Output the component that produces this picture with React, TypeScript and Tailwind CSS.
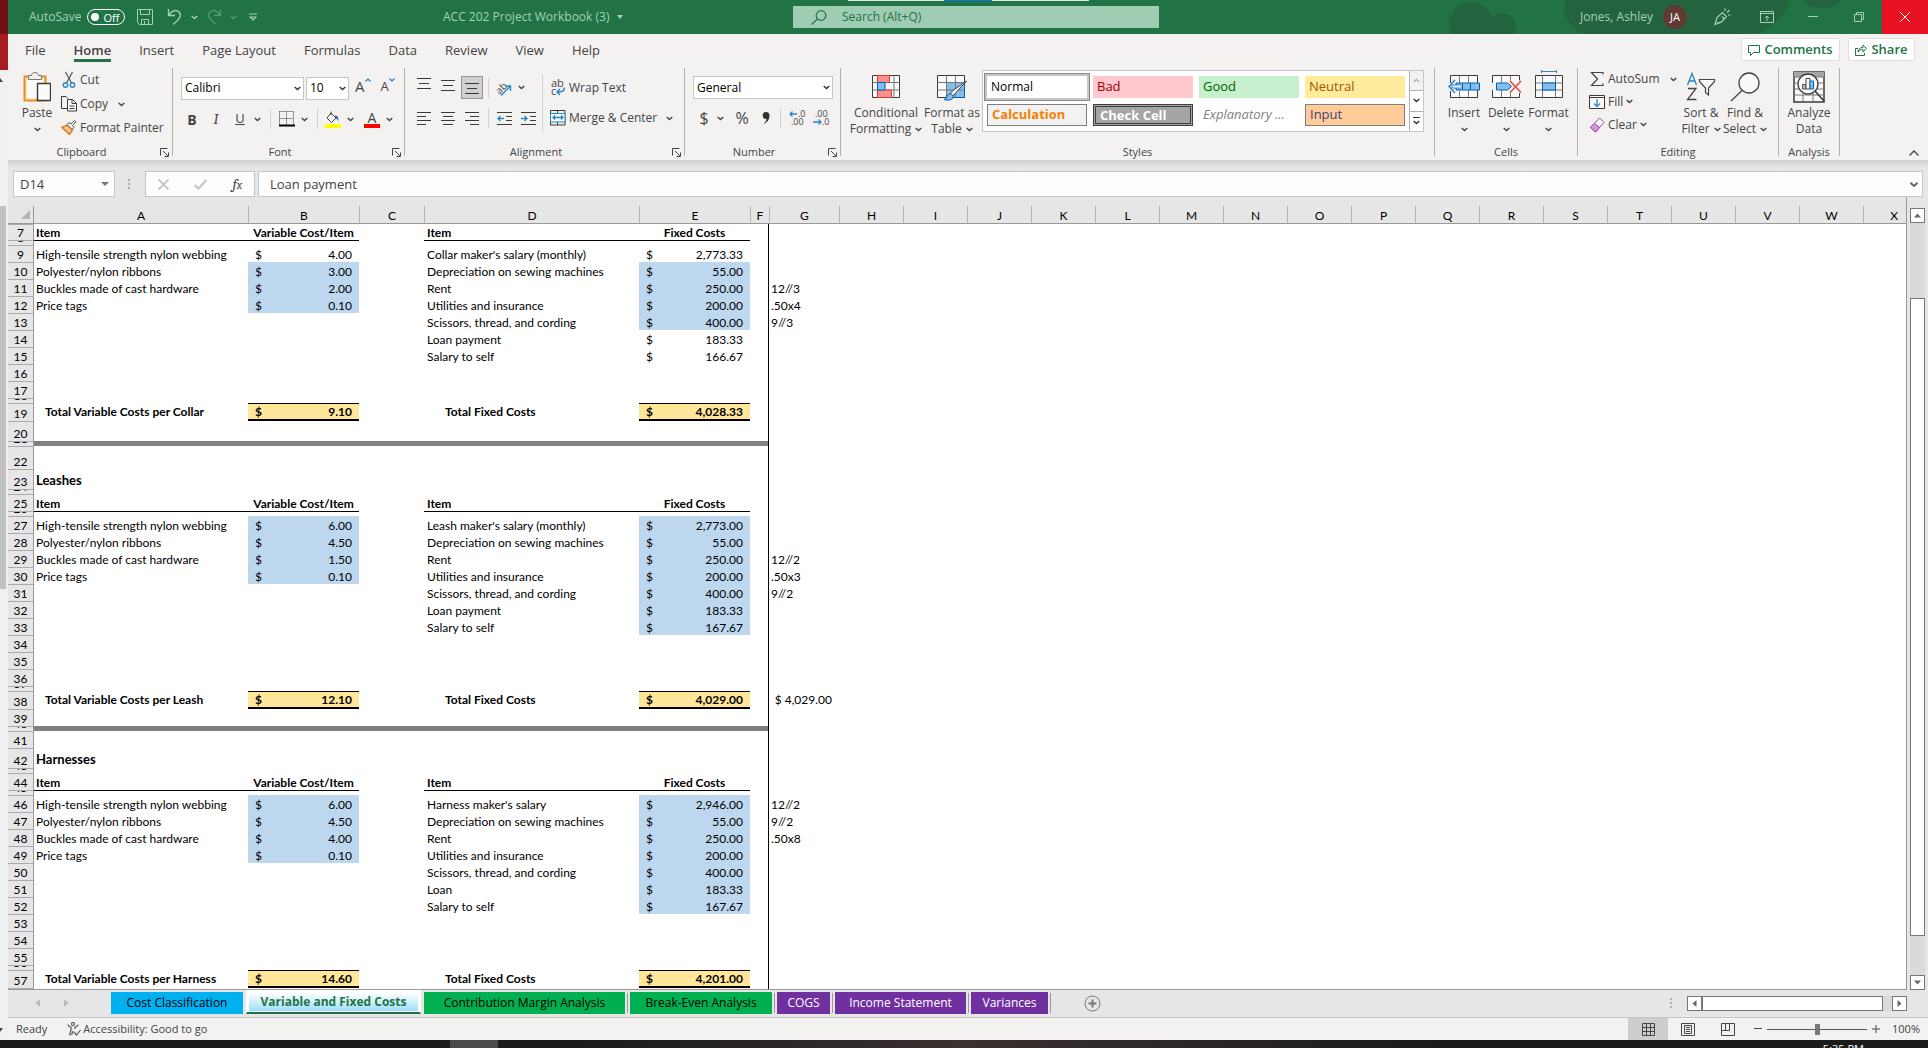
import React, { useState } from 'react';

interface IconProps {
  className?: string;
}

const Chevron: React.FC<IconProps> = ({ className = '' }) => (
  <svg className={`w-[7px] h-[5px] shrink-0 ${className}`} viewBox="0 0 7 5" fill="none" stroke="currentColor" strokeWidth={1.4}>
    <path d="M0.7 0.9 3.5 3.6 6.3 0.9" />
  </svg>
);

const Launcher: React.FC<{ label: string }> = ({ label }) => (
  <button aria-label={label} className="text-[#444]">
    <svg className="w-[9px] h-[9px]" viewBox="0 0 9 9" fill="none" stroke="currentColor">
      <path d="M0.5 7.5v-7h7M3 3l5 5M8.5 4.5v4h-4" />
    </svg>
  </button>
);

const Divider: React.FC<IconProps> = ({ className = 'h-5' }) => <span className={`w-px shrink-0 bg-[#d2d0ce] ${className}`} />;

const Group: React.FC<{ label: string; launcher?: boolean; className: string; children: React.ReactNode }> = ({
  label,
  launcher,
  className,
  children,
}) => (
  <section aria-label={label} className={`flex h-[88px] shrink-0 flex-col border-r border-[#b3b0ad] ${className}`}>
    <div className="flex h-[76px] shrink-0 items-start">{children}</div>
    <div className="flex h-4 shrink-0 items-center px-[3px]">
      <span className={`flex-1 text-center text-[11px] leading-4 ${launcher ? 'pr-2' : ''}`}>{label}</span>
      {launcher && <Launcher label={`${label} settings`} />}
    </div>
  </section>
);

const BigButton: React.FC<{ icon: React.ReactNode; lines: string[]; chevron?: 'inline' | 'below'; className: string }> = ({
  icon,
  lines,
  chevron,
  className,
}) => (
  <button className={`flex flex-col items-center text-[12px] leading-4 ${className}`}>
    <span className="flex h-[37px] items-center justify-center">{icon}</span>
    {lines.map((line, i) => (
      <span key={line} className="flex items-center gap-1 whitespace-nowrap">
        {line}
        {chevron === 'inline' && i === lines.length - 1 && <Chevron />}
      </span>
    ))}
    {chevron === 'below' && (
      <span className="flex h-4 items-center">
        <Chevron />
      </span>
    )}
  </button>
);

/* icons */

const PasteIcon = () => (
  <svg className="w-7 h-8" viewBox="0 0 28 32" fill="none">
    <path d="M1.5 5.5h21v24h-21z" fill="#fbe3b3" stroke="#e0922f" strokeWidth={2} />
    <path d="M4 8h16v19H4z" fill="#fafafa" />
    <path d="M5.5 8.5v-4h3C8.5 0.5 15.5 0.5 15.5 4.5h3v4z" fill="#f3f2f1" stroke="#777" />
    <path d="M14.5 12.5h13v17h-13z" fill="#fafafa" stroke="#3b3a39" strokeWidth={1.4} />
  </svg>
);

const CutIcon = () => (
  <svg className="w-4 h-[18px]" viewBox="0 0 16 18" fill="none">
    <path d="M4.5 1 10.5 12M11.5 1 5.5 12" stroke="#555" strokeWidth={1.2} />
    <circle cx="4.5" cy="14" r="2.2" stroke="#2b88c8" strokeWidth={1.4} />
    <circle cx="11.5" cy="14" r="2.2" stroke="#2b88c8" strokeWidth={1.4} />
  </svg>
);

const CopyIcon = () => (
  <svg className="w-4 h-[18px]" viewBox="0 0 16 18" fill="none" stroke="#3b3a39">
    <path d="M6 13.5H0.5v-12h4.5l2 2" />
    <path d="M6.5 4.5h5l4 4v7.5h-9z" fill="#fafafa" />
    <path d="M11 4.5v4h4.5M8.5 11h5M8.5 13.5h5" />
  </svg>
);

const PainterIcon = () => (
  <svg className="w-4 h-[18px]" viewBox="0 0 16 18" fill="none">
    <path d="M1 8.5 6.5 6l5 5L8.5 15.5z" fill="#f8c98b" stroke="#e07a1a" strokeWidth={1.4} />
    <path d="M3 10l5.5 5" stroke="#e07a1a" />
    <path d="M6 5.5 8 3.5l2 1.5L13.5 1.5l1.500 1.5-3.500 3.5 1.500 2-2 2z" fill="#f3f2f1" stroke="#555" />
  </svg>
);

const BordersIcon = () => (
  <svg className="w-4 h-4" viewBox="0 0 16 16" fill="none" stroke="#3b3a39">
    <path d="M0.5 0.5h14M0.5 0.5v14M14.5 0.5v14M7.5 0.5v14M0.5 7.5h14" strokeDasharray="1 1" />
    <path d="M0 14.5h16" strokeWidth={2} stroke="#000" />
  </svg>
);

const FillColorIcon = () => (
  <svg className="w-4 h-[17px]" viewBox="0 0 16 17" fill="none">
    <path d="M6 2 11 7 6.5 11.5 2 7zM6 4V0.5" stroke="#444" />
    <path d="M10 4.5c2 0 3.500 1.500 3.500 6-1-2.500-2-3-3-3z" fill="#1f5f9e" />
    <path d="M0 13h16v4H0z" fill="#ffff00" />
  </svg>
);

const FontColorIcon = () => (
  <span className="flex w-4 flex-col items-center">
    <span className="text-[14px] leading-[13px]">A</span>
    <span className="h-1 w-4 bg-[#ff0000]" />
  </span>
);

const LINES: Record<string, string> = {
  top: 'M0 1.5h14M2 6.5h10M0 11.5h14',
  middle: 'M0 1.5h14M2 6.5h10M0 11.5h14',
  bottom: 'M0 1.5h14M2 6.5h10M0 11.5h14',
  left: 'M0 0.5h14M0 4.5h9M0 8.5h14M0 12.5h9',
  center: 'M0 0.5h14M2 4.5h10M0 8.5h14M2 12.5h10',
  right: 'M0 0.5h14M5 4.5h9M0 8.5h14M5 12.5h9',
};

const AlignIcon: React.FC<{ kind: string }> = ({ kind }) => (
  <svg className="w-[14px] h-[13px]" viewBox="0 0 14 13" fill="none" stroke="#3b3a39">
    <path d={LINES[kind]} />
  </svg>
);

const OrientationIcon = () => (
  <svg className="w-[18px] h-[18px] overflow-visible" viewBox="0 0 18 18" fill="none">
    <text x="1" y="13" fontSize="10" fill="#444" transform="rotate(-45 6 10)" fontFamily="Open Sans">
      ab
    </text>
    <path d="M6 16.5 15.5 7M10.5 7h5v5" stroke="#2b88c8" strokeWidth={1.4} />
  </svg>
);

const IndentIcon: React.FC<{ out?: boolean }> = ({ out }) => (
  <svg className="w-[15px] h-[13px]" viewBox="0 0 15 13" fill="none">
    <path d="M0 0.5h15M9 4.5h6M9 8.5h6M0 12.5h15" stroke="#3b3a39" />
    <path d={out ? 'M7 6.5H1M3.5 4 1 6.5 3.5 9' : 'M0 6.5h6M3.5 4 6 6.5 3.5 9'} stroke="#2b88c8" strokeWidth={1.3} />
  </svg>
);

const WrapIcon = () => (
  <svg className="w-4 h-[18px] overflow-visible" viewBox="0 0 16 18" fill="none">
    <text x="1" y="8" fontSize="11" fill="#444" fontFamily="Open Sans">
      ab
    </text>
    <text x="1" y="16" fontSize="11" fill="#444" fontFamily="Open Sans">
      c
    </text>
    <path d="M14 8.5c1 4-2 4.5-7 4.5M10 10l-3 3 3 3" stroke="#2b88c8" strokeWidth={1.5} />
  </svg>
);

const MergeIcon = () => (
  <svg className="w-4 h-4" viewBox="0 0 16 16" fill="none">
    <path d="M0.5 0.5h14.5v14.5H0.5zM7.5 0.5v3M7.5 12v3" stroke="#3b3a39" />
    <path d="M0.5 3.5h14.5v8.5H0.5z" fill="#f3fafe" stroke="#2b88c8" />
    <path d="M3 7.5h10M5 5.5l-2 2 2 2M11 5.5l2 2-2 2" stroke="#2b88c8" strokeWidth={1.3} />
  </svg>
);

const DecimalIcon: React.FC<{ more?: boolean }> = ({ more }) => (
  <svg className="w-4 h-[18px] overflow-visible" viewBox="0 0 16 18" fill="none" fontFamily="Open Sans" fontSize="9">
    <text x={more ? 9 : 2} y="8" fill="#444">
      {more ? '.0' : '.00'}
    </text>
    <text x={more ? 2 : 9} y="16" fill="#444">
      {more ? '.00' : '.0'}
    </text>
    <path d={more ? 'M8 5H1M3.5 2.5 1 5l2.5 2.5' : 'M0 13h8M5.5 10.5 8 13l-2.5 2.5'} stroke="#2b88c8" strokeWidth={1.3} />
  </svg>
);

const ConditionalIcon = () => (
  <svg className="w-7 h-[23px]" viewBox="0 0 28 23" fill="none">
    <path d="M0.5 0.5h27v22h-27z" fill="#fafafa" stroke="#3b3a39" />
    <path d="M0.5 7.5h27M0.5 15h27M5.5 0.5v22M22 0.5v22" stroke="#777" />
    <path d="M5.5 0.5h12v7h-12zM5.5 15h14v7.5h-14z" fill="#fb9090" stroke="#e03a32" />
    <path d="M5.5 7.5h7.5V15H5.5z" fill="#83beec" stroke="#0063b1" />
  </svg>
);

const FormatTableIcon = () => (
  <svg className="w-8 h-7" viewBox="0 0 32 28" fill="none">
    <path d="M1.5 2.5h27v22h-27z" fill="#fafafa" stroke="#3b3a39" />
    <path d="M10.5 9.5h18v15h-18z" fill="#83beec" stroke="#0063b1" />
    <path d="M1.5 9.5h27M1.5 17h27M10.5 2.5v22M19.5 2.5v22" stroke="#777" />
    <path d="M30.5 8 20 19.5l-3 3.5-3-2 3-3.5z" fill="#fafafa" stroke="#444" />
    <path d="M8 26.5c3 0 2-5 6-5.5 3 0 4 3 2 5-2 1.5-5 1.5-8 .5z" fill="#83beec" stroke="#0063b1" />
  </svg>
);

const InsertIcon = () => (
  <svg className="w-8 h-[23px]" viewBox="0 0 32 23" fill="none">
    <path d="M2.5 0.5h27v22h-27z" fill="#fafafa" stroke="#3b3a39" />
    <path d="M11.5 0.5v22M20.5 0.5v22" stroke="#777" />
    <path d="M0 8h13v8H0z" fill="#f3f2f1" />
    <path d="M8 8h23.5v7H8z" fill="#83beec" stroke="#0063b1" />
    <path d="M22.5 8v7M14.5 8v7" stroke="#0063b1" />
    <path d="M13 10H4v3h9" fill="#fff" stroke="#2b88c8" />
    <path d="M7 5 1 11.5 7 18" stroke="#2b88c8" strokeWidth={1.6} />
  </svg>
);

const DeleteIcon = () => (
  <svg className="w-8 h-[23px]" viewBox="0 0 32 23" fill="none">
    <path d="M2.5 0.5h27v22h-27z" fill="#fafafa" stroke="#3b3a39" />
    <path d="M11.5 0.5v22M20.5 0.5v22" stroke="#777" />
    <path d="M0 8h31v7H0z" fill="#f3f2f1" />
    <path d="M6.5 8h11l4 3.5-4 3.5h-11z" fill="#83beec" stroke="#0063b1" />
    <path d="M20 6l11 11.5M31 6 20 17.5" stroke="#f3f2f1" strokeWidth={3} />
    <path d="M20 6l11 11.5M31 6 20 17.5" stroke="#e8453c" strokeWidth={1.5} />
  </svg>
);

const FormatIcon = () => (
  <svg className="mb-[5px] w-7 h-7" viewBox="0 0 28 28" fill="none">
    <path d="M0.5 5.5h27v22h-27z" fill="#fafafa" stroke="#3b3a39" />
    <path d="M0.5 13h27M0.5 20h27M7.5 5.5v22M20.5 5.5v22" stroke="#777" />
    <path d="M7.5 13h13v7h-13z" fill="#83beec" stroke="#0063b1" />
    <path d="M7 1.5h14M6.5 0v3M21.5 0v3" stroke="#2b88c8" />
  </svg>
);

const SumIcon = () => (
  <svg className="w-4 h-4" viewBox="0 0 16 16" fill="none" stroke="#444" strokeWidth={1.2}>
    <path d="M14 3.5V1.5H2.5l6 6.5-6 6.5H14v-2" />
  </svg>
);

const FillIcon = () => (
  <svg className="w-4 h-4" viewBox="0 0 16 16" fill="none">
    <path d="M0.5 1.5h15v13h-15zM0.5 3.5h15" fill="#fafafa" stroke="#3b3a39" />
    <path d="M8 5v7M5 9.5l3 3 3-3" stroke="#2b88c8" strokeWidth={1.3} />
  </svg>
);

const ClearIcon = () => (
  <svg className="w-4 h-4" viewBox="0 0 16 16" fill="none" stroke="#9b3fa8">
    <path d="M10.5 1 15 5.5 6.5 15 1.5 10.5z" fill="#fafafa" />
    <path d="M5.5 6.5 10.5 10.5 6.5 15 1.5 10.5z" fill="#d69bdc" />
  </svg>
);

const SortIcon = () => (
  <svg className="w-[30px] h-[30px]" viewBox="0 0 30 30" fill="none">
    <path d="M1.5 13 6 1.5 10.5 13M3 9h6" stroke="#2b88c8" strokeWidth={1.4} />
    <path d="M2 16.5h8L1.5 27.5h9" stroke="#444" strokeWidth={1.3} />
    <path d="M13.5 7.5h15v2l-6 6.5v7l-3-2.5V16l-6-6.5z" stroke="#444" strokeWidth={1.2} fill="#fafafa" />
  </svg>
);

const FindIcon = () => (
  <svg className="w-[30px] h-[30px]" viewBox="0 0 30 30" fill="none" stroke="#444" strokeWidth={1.3}>
    <circle cx="19" cy="11" r="10" fill="#fafafa" />
    <path d="M12 18.5 1 29" />
  </svg>
);

const AnalyzeIcon = () => (
  <svg className="w-8 h-8" viewBox="0 0 32 32" fill="none">
    <path d="M1 1h30v30H1z" fill="#fafafa" stroke="#3b3a39" strokeWidth={1.5} />
    <path d="M1 1h30v5H1z" fill="#a8a6a4" />
    <path d="M1 6h30M1 12h30M1 18h30M1 24h30M10 22v9M20 22v9" stroke="#777" />
    <circle cx="15" cy="13" r="10" fill="#fafafa" stroke="#444" strokeWidth={1.4} />
    <path d="M9.5 13.5h3.5V18H9.5z" fill="#bbb" stroke="#555" />
    <path d="M13 7.5h4V18h-4z" fill="#fafafa" stroke="#444" />
    <path d="M17 10h3.5v8H17z" fill="#83beec" stroke="#0063b1" />
    <path d="M22 20l9 10" stroke="#333" strokeWidth={1.5} />
  </svg>
);

/* title bar */

const TitleBar = () => {
  const [autoSave, setAutoSave] = useState(false);

  return (
    <header className="relative flex h-[34px] shrink-0 items-center bg-[#217346] text-[12px] text-[#a3d0b6]">
      <svg className="absolute right-0 top-0 h-[34px] w-[520px]" viewBox="0 0 520 34" fill="#24633f">
        <circle cx="63" cy="24" r="22" />
        <circle cx="94" cy="27" r="14" />
        <path d="M158 0H240V34H176C162 28 152 14 158 0z" />
        <path d="M232 0H382C378 14 366 26 348 34H232z" />
        <path d="M395 0h38c-4 10-30 12-38 0z" />
      </svg>
      <div className="relative flex flex-1 items-center">
        <span className="pl-[21px]">AutoSave</span>
        <button
          aria-pressed={autoSave}
          aria-label="AutoSave"
          onClick={() => setAutoSave(!autoSave)}
          className="ml-[6px] flex h-4 w-[38px] items-center justify-between rounded-full border border-white pl-[3px] pr-[5px] text-[11px] leading-none text-white"
        >
          <span className="h-2 w-2 rounded-full bg-white" />
          {autoSave ? 'On' : 'Off'}
        </button>
        <button aria-label="Save" className="ml-3">
          <svg className="w-4 h-4" viewBox="0 0 16 16" fill="none" stroke="currentColor">
            <path d="M0.5 0.5h15v15h-13l-2-2zM3.5 0.5v5h9v-5M4.5 15.5v-5h7v5M7.5 12v3" />
          </svg>
        </button>
        <button aria-label="Undo" className="ml-[14px] flex items-center gap-2">
          <svg className="w-4 h-[18px]" viewBox="0 0 16 18" fill="none" stroke="currentColor" strokeWidth={1.4}>
            <path d="M1.5 1v6.5H8M1.5 7.5C5 2 9 1.5 12 4c3 3 1 7-6 12.5" />
          </svg>
          <Chevron />
        </button>
        <button aria-label="Redo" className="ml-2 flex items-center gap-2 opacity-40">
          <svg className="w-4 h-[18px]" viewBox="0 0 16 18" fill="none" stroke="currentColor" strokeWidth={1.4}>
            <path d="M14.5 1v6.5H8M14.5 7.5C11 2 7 1.5 4 4c-3 3-1 7 6 12.5" />
          </svg>
          <Chevron />
        </button>
        <button aria-label="Customize Quick Access Toolbar" className="ml-3">
          <svg className="w-2 h-2" viewBox="0 0 8 8" fill="none" stroke="currentColor" strokeWidth={1.2}>
            <path d="M0 1h8M1 4l3 3 3-3z" />
          </svg>
        </button>
        <h1 className="flex flex-1 items-center justify-center gap-2 pl-4">
          ACC 202 Project Workbook (3)
          <svg className="w-[6px] h-1" viewBox="0 0 6 4" fill="currentColor">
            <path d="M0 0h6L3 4z" />
          </svg>
        </h1>
      </div>
      <label className="relative flex h-[22px] w-[366px] items-center bg-[#9fcdb4] pl-[18px] text-[#217346]">
        <svg className="h-[15px] w-4" viewBox="0 0 16 15" fill="none" stroke="currentColor" strokeWidth={1.2}>
          <circle cx="10" cy="5.5" r="4.8" />
          <path d="M6.5 9 0.5 14.5" />
        </svg>
        <input
          type="text"
          aria-label="Search"
          placeholder="Search (Alt+Q)"
          className="ml-[15px] flex-1 bg-transparent text-[12px] outline-none placeholder:text-[#217346]"
        />
      </label>
      <div className="relative flex h-full w-[769px] items-center justify-end">
        <span>Jones, Ashley</span>
        <span className="ml-[10px] flex h-6 w-6 items-center justify-center rounded-full bg-[#5f3a32] text-[11px] text-white">JA</span>
        <button aria-label="Coming soon" className="ml-[26px]">
          <svg className="w-[18px] h-[18px]" viewBox="0 0 18 18" fill="none" stroke="currentColor" strokeWidth={1.2}>
            <path d="M2 16.5 4 9.5 9.5 4.5l4 4-5 5.5zM4 15l4-1M9 8.5l2 2M12 3V0.5M14 4.5l2.5-2.5M15 7h2.5" />
          </svg>
        </button>
        <button aria-label="Ribbon display options" className="ml-[29px]">
          <svg className="w-[14px] h-3" viewBox="0 0 14 12" fill="none" stroke="currentColor">
            <path d="M0.5 0.5h13v11H0.5zM0.5 2.5h13M7 10V5M5 7l2-2 2 2" />
          </svg>
        </button>
        <button aria-label="Minimize" className="ml-[34px]">
          <svg className="w-[10px] h-[10px]" viewBox="0 0 10 10" stroke="currentColor">
            <path d="M0 4.5h10" />
          </svg>
        </button>
        <button aria-label="Restore" className="ml-9 mr-[18px]">
          <svg className="w-[10px] h-[10px]" viewBox="0 0 10 10" fill="none" stroke="currentColor">
            <path d="M0.5 2.5h7v7h-7zM2.5 2.5v-2h7v7h-2" />
          </svg>
        </button>
        <button aria-label="Close" className="flex h-full w-[46px] items-center justify-center bg-[#e81123] text-white">
          <svg className="w-[10px] h-[10px]" viewBox="0 0 10 10" stroke="currentColor">
            <path d="M0 0l10 10M10 0 0 10" />
          </svg>
        </button>
      </div>
      <div className="absolute left-[840px] top-0 flex h-px w-[241px] bg-[#dfe8e2]">
        <span className="ml-24 w-12 bg-[#0078d7]" />
      </div>
    </header>
  );
};

const MENU = ['File', 'Home', 'Insert', 'Page Layout', 'Formulas', 'Data', 'Review', 'View', 'Help'];

const MenuBar = () => (
  <nav className="flex h-[34px] shrink-0 items-start pl-[3px] pt-1 text-[#444]">
    {MENU.map((item) => (
      <button key={item} className="px-[14px] text-[13px]">
        <span className={`block h-6 leading-6 ${item === 'Home' ? 'border-b-[3px] border-[#217346] font-semibold' : ''}`}>{item}</span>
      </button>
    ))}
    <div className="ml-auto flex gap-2 pr-[13px] text-[13px] font-semibold text-[#217346]">
      <button className="flex h-[23px] w-[99px] items-center justify-center gap-1 rounded-xs border border-[#e1dfdd] bg-white">
        <svg className="w-3 h-3" viewBox="0 0 12 12" fill="none" stroke="currentColor">
          <path d="M0.5 1.5h11v7h-6l-3 3v-3h-2z" />
        </svg>
        Comments
      </button>
      <button className="flex h-[23px] w-[67px] items-center justify-center gap-1 rounded-xs border border-[#e1dfdd] bg-white">
        <svg className="w-3 h-3" viewBox="0 0 12 12" fill="none" stroke="currentColor">
          <path d="M3 4.5H0.5v7h9V9M3 8c0-3 2-4.5 5-4.5V1l3.5 3.5L8 8V5.5C6 5.5 4 6 3 8z" />
        </svg>
        Share
      </button>
    </div>
  </nav>
);

/* ribbon */

const Picker: React.FC<{ label: string; value: string; className: string }> = ({ label, value, className }) => (
  <span className={`relative flex h-[23px] shrink-0 items-center ${className}`}>
    <select aria-label={label} className="h-full w-full appearance-none border border-[#c8c6c4] bg-white pl-[3px] text-[12px] text-black">
      <option>{value}</option>
    </select>
    <Chevron className="pointer-events-none absolute right-[3px] text-[#333]" />
  </span>
);

const STYLE_BASE = 'h-[22px] w-[100px] overflow-hidden text-left pl-1 whitespace-nowrap';
const CELL_STYLES = [
  { name: 'Normal', className: 'bg-white text-black text-[12px] outline-2 outline-[#c8c6c4] ring-3 ring-[#8a8886]' },
  { name: 'Bad', className: 'bg-[#ffc7ce] text-[#9c0006] text-[13px]' },
  { name: 'Good', className: 'bg-[#c6efce] text-[#006100] text-[13px]' },
  { name: 'Neutral', className: 'bg-[#ffeb9c] text-[#9c5700] text-[13px]' },
  { name: 'Calculation', className: 'border border-[#7f7f7f] bg-[#f2f2f2] font-bold text-[#fa7d00] text-[13px]' },
  { name: 'Check Cell', className: 'border-3 border-double border-[#3f3f3f] bg-[#a5a5a5] font-bold leading-4 text-white text-[13px]' },
  { name: 'Explanatory ...', className: 'italic text-[#7f7f7f] text-[13px]' },
  { name: 'Input', className: 'border border-[#7f7f7f] bg-[#ffcc99] text-[#3f3f76] text-[13px]' },
];

const Ribbon = () => (
  <div className="flex h-[92px] shrink-0 overflow-hidden text-[12px] text-[#444]">
    <Group label="Clipboard" launcher className="w-[165px]">
      <BigButton icon={<PasteIcon />} lines={['Paste']} chevron="below" className="ml-[9px] w-10" />
      <div className="ml-1 flex flex-col">
        <button className="flex h-6 items-center gap-[3px]">
          <CutIcon />
          Cut
        </button>
        <button className="flex h-6 items-center gap-[3px]">
          <CopyIcon />
          Copy
          <Chevron className="ml-[7px]" />
        </button>
        <button className="flex h-6 items-center gap-[3px] whitespace-nowrap">
          <PainterIcon />
          Format Painter
        </button>
      </div>
    </Group>

    <Group label="Font" launcher className="w-[232px]">
      <div className="flex flex-col gap-[9px] pl-2 pt-2">
        <div className="flex items-center">
          <Picker label="Font" value="Calibri" className="w-[123px]" />
          <Picker label="Font size" value="10" className="ml-[2px] w-[43px]" />
          <button aria-label="Increase font size" className="ml-[6px] flex pb-1 text-[15px] leading-5">
            A
            <svg className="mt-[2px] h-1 w-[6px]" viewBox="0 0 6 4" fill="none" stroke="#2b88c8" strokeWidth={1.3}>
              <path d="M0.5 3.5 3 1l2.5 2.5" />
            </svg>
          </button>
          <button aria-label="Decrease font size" className="ml-[10px] flex pb-1 text-[13px] leading-5">
            A
            <svg className="mt-[2px] h-1 w-[6px]" viewBox="0 0 6 4" fill="none" stroke="#2b88c8" strokeWidth={1.3}>
              <path d="M0.5 0.5 3 3l2.5-2.5" />
            </svg>
          </button>
        </div>
        <div className="flex h-5 items-center">
          <button className="ml-px w-5 text-[14px] font-bold">B</button>
          <button className="ml-1 w-5 font-serif text-[15px] italic">I</button>
          <button className="ml-1 w-5 text-[13px] underline">U</button>
          <Chevron className="ml-1" />
          <Divider className="ml-[9px] h-5" />
          <button aria-label="Borders" className="ml-2">
            <BordersIcon />
          </button>
          <Chevron className="ml-[6px]" />
          <Divider className="ml-[9px] h-5" />
          <button aria-label="Fill color" className="ml-[7px]">
            <FillColorIcon />
          </button>
          <Chevron className="ml-[6px]" />
          <button aria-label="Font color" className="ml-[10px]">
            <FontColorIcon />
          </button>
          <Chevron className="ml-[6px]" />
        </div>
      </div>
    </Group>

    <Group label="Alignment" launcher className="w-[280px]">
      <div className="flex flex-col gap-[9px] pl-2 pt-2">
        <div className="flex h-[23px] items-center">
          <button aria-label="Top align" className="flex w-[22px] justify-center pb-2">
            <AlignIcon kind="top" />
          </button>
          <button aria-label="Middle align" className="ml-[2px] flex w-[22px] justify-center pb-1">
            <AlignIcon kind="middle" />
          </button>
          <button aria-label="Bottom align" className="ml-[2px] flex h-[23px] w-[22px] items-end justify-center border border-[#979593] bg-[#d2d0ce] pb-[3px]">
            <AlignIcon kind="bottom" />
          </button>
          <Divider className="ml-[5px] h-5" />
          <button aria-label="Orientation" className="ml-[6px] flex items-center gap-[5px]">
            <OrientationIcon />
            <Chevron />
          </button>
        </div>
        <div className="flex h-5 items-center">
          <button aria-label="Align left" className="flex w-[22px] justify-center">
            <AlignIcon kind="left" />
          </button>
          <button aria-label="Center" className="ml-[2px] flex w-[22px] justify-center">
            <AlignIcon kind="center" />
          </button>
          <button aria-label="Align right" className="ml-[2px] flex w-[22px] justify-center">
            <AlignIcon kind="right" />
          </button>
          <Divider className="ml-[5px] h-5" />
          <button aria-label="Decrease indent" className="ml-2">
            <IndentIcon out />
          </button>
          <button aria-label="Increase indent" className="ml-[9px]">
            <IndentIcon />
          </button>
        </div>
      </div>
      <Divider className="ml-[6px] mt-[6px] h-[58px]" />
      <div className="flex flex-col gap-[9px] pl-[7px] pt-2">
        <button className="flex h-[23px] items-center gap-[3px] whitespace-nowrap">
          <WrapIcon />
          Wrap Text
        </button>
        <button className="flex h-5 items-center gap-[3px] whitespace-nowrap">
          <MergeIcon />
          Merge &amp; Center
          <Chevron className="ml-[6px]" />
        </button>
      </div>
    </Group>

    <Group label="Number" launcher className="w-[156px]">
      <div className="flex flex-col gap-[9px] pl-2 pt-2">
        <Picker label="Number format" value="General" className="w-[140px]" />
        <div className="flex h-5 items-center">
          <button className="ml-[5px] w-3 text-[16px]">$</button>
          <Chevron className="ml-[7px]" />
          <button className="ml-2 w-5 text-[16px]">%</button>
          <button aria-label="Comma style" className="ml-[10px]">
            <svg className="w-2 h-3" viewBox="0 0 8 12" fill="#333">
              <path d="M4 0a3.5 3.5 0 0 1 3.500 3.500C7.500 8 5 10.500 1.500 12 3.500 10 4.500 8.500 4.500 7A3.500 3.500 0 1 1 4 0z" />
            </svg>
          </button>
          <Divider className="ml-[10px] h-5" />
          <button aria-label="Increase decimal" className="ml-2">
            <DecimalIcon more />
          </button>
          <button aria-label="Decrease decimal" className="ml-2">
            <DecimalIcon />
          </button>
        </div>
      </div>
    </Group>

    <Group label="Styles" className="w-[594px]">
      <BigButton icon={<ConditionalIcon />} lines={['Conditional', 'Formatting']} chevron="inline" className="ml-3 w-[66px]" />
      <BigButton icon={<FormatTableIcon />} lines={['Format as', 'Table']} chevron="inline" className="ml-[3px] w-[60px]" />
      <div className="mt-[2px] flex border border-[#c8c6c4] bg-white">
        <div className="grid grid-cols-4 gap-[6px] px-[4px] py-[5px]">
          {CELL_STYLES.map((s) => (
            <button key={s.name} className={`${STYLE_BASE} ${s.className}`}>
              {s.name}
            </button>
          ))}
        </div>
        <div className="flex w-[14px] flex-col divide-y divide-[#b3b0ad] border-l border-[#b3b0ad] text-[#333]">
          <button aria-label="Previous styles" className="flex flex-1 items-center justify-center bg-[#f3f2f1] text-[#b3b0ad]">
            <Chevron className="rotate-180" />
          </button>
          <button aria-label="Next styles" className="flex flex-1 items-center justify-center">
            <Chevron />
          </button>
          <button aria-label="More styles" className="flex flex-1 flex-col items-center justify-center gap-[2px]">
            <span className="h-px w-[7px] bg-[#333]" />
            <Chevron />
          </button>
        </div>
      </div>
    </Group>

    <Group label="Cells" className="w-[143px]">
      <BigButton icon={<InsertIcon />} lines={['Insert']} chevron="below" className="ml-2 w-[42px]" />
      <BigButton icon={<DeleteIcon />} lines={['Delete']} chevron="below" className="w-[42px]" />
      <BigButton icon={<FormatIcon />} lines={['Format']} chevron="below" className="w-[43px]" />
    </Group>

    <Group label="Editing" className="w-[201px]">
      <div className="ml-[11px] flex w-[90px] flex-col">
        <button className="flex h-[22px] items-center gap-[3px]">
          <SumIcon />
          AutoSum
          <Chevron className="ml-[7px]" />
        </button>
        <button className="flex h-[23px] items-center gap-[3px]">
          <FillIcon />
          Fill
          <Chevron />
        </button>
        <button className="flex h-[23px] items-center gap-[3px]">
          <ClearIcon />
          Clear
          <Chevron />
        </button>
      </div>
      <BigButton icon={<SortIcon />} lines={['Sort &', 'Filter']} chevron="inline" className="w-11" />
      <BigButton icon={<FindIcon />} lines={['Find &', 'Select']} chevron="inline" className="w-11" />
    </Group>

    <Group label="Analysis" className="w-[61px]">
      <BigButton icon={<AnalyzeIcon />} lines={['Analyze', 'Data']} className="w-[60px]" />
    </Group>

    <button aria-label="Collapse ribbon" className="ml-auto mr-[9px] self-end pb-1">
      <svg className="w-[10px] h-[6px]" viewBox="0 0 10 6" fill="none" stroke="#444" strokeWidth={1.3}>
        <path d="M0.5 5.5 5 1l4.5 4.5" />
      </svg>
    </button>
  </div>
);

const FormulaBar = () => {
  const [formula, setFormula] = useState('Loan payment');

  return (
    <div className="flex h-[37px] shrink-0 items-start bg-linear-to-b from-[#cfcfcf] to-[#e6e6e6] to-20% pl-[5px] pr-[5px] pt-[11px] text-[13px] text-[#444]">
      <label className="relative flex items-center">
        <input aria-label="Name box" defaultValue="D14" className="h-[26px] w-[102px] border border-[#c6c6c6] bg-[#fdfdfd] pl-[6px]" />
        <svg className="absolute right-[6px] h-1 w-2" viewBox="0 0 8 4" fill="#777">
          <path d="M0 0h8L4 4z" />
        </svg>
      </label>
      <svg className="ml-[13px] mt-2 h-[10px] w-[2px]" viewBox="0 0 2 10" fill="#aaa">
        <path d="M0 0h2v2H0zM0 4h2v2H0zM0 8h2v2H0z" />
      </svg>
      <div className="ml-[15px] flex h-[26px] w-[110px] items-center justify-between border border-[#c6c6c6] bg-[#fdfdfd] pl-3 pr-3">
        <button aria-label="Cancel">
          <svg className="h-[11px] w-[11px]" viewBox="0 0 11 11" stroke="#c3c3c3" strokeWidth={1.8}>
            <path d="M0.5 0.5l10 10M10.5 0.5l-10 10" />
          </svg>
        </button>
        <button aria-label="Enter">
          <svg className="h-[11px] w-[13px]" viewBox="0 0 13 11" fill="none" stroke="#c3c3c3" strokeWidth={2}>
            <path d="M0.5 6 4.5 9.5 12.5 1" />
          </svg>
        </button>
        <button aria-label="Insert function" className="font-serif text-[15px] italic leading-none">
          f<span className="text-[12px]">x</span>
        </button>
      </div>
      <label className="relative ml-[3px] flex flex-1 items-center">
        <input
          aria-label="Formula bar"
          value={formula}
          onChange={(e) => setFormula(e.target.value)}
          className="h-[26px] w-full border border-[#c6c6c6] bg-[#fdfdfd] pl-[11px]"
        />
        <svg className="absolute right-[5px] h-[5px] w-2" viewBox="0 0 8 5" fill="none" stroke="#666" strokeWidth={2}>
          <path d="M0.5 0.8 4 4 7.5 0.8" />
        </svg>
      </label>
    </div>
  );
};

/* sheet */

type Cost = [name: string, amount: string, input?: boolean];

interface Row {
  n: number;
  h: number;
  kind?: 'title' | 'head' | 'rule' | 'total' | 'bar';
  a?: string;
  b?: Cost;
  d?: Cost;
  g?: string;
}

const VARIABLE_ITEMS = ['High-tensile strength nylon webbing', 'Polyester/nylon ribbons', 'Buckles made of cast hardware', 'Price tags'];

const variable = (amounts: string[], firstInput = true): Cost[] =>
  amounts.map((amount, i) => [VARIABLE_ITEMS[i], amount, i > 0 || firstInput]);

const body = (start: number, count: number, left: Cost[], right: Cost[], notes: Record<number, string>): Row[] =>
  Array.from({ length: count }, (_, i) => ({ n: start + i, h: 17, b: left[i], d: right[i], g: notes[start + i] }));

const total = (n: number, product: string, left: string, right: string, g?: string): Row => ({
  n,
  h: 18,
  kind: 'total',
  b: [`Total Variable Costs per ${product}`, left],
  d: ['Total Fixed Costs', right],
  g,
});

const ROWS: Row[] = [
  { n: 7, h: 16, kind: 'head' },
  { n: 8, h: 5, kind: 'rule' },
  ...body(
    9,
    9,
    variable(['4.00', '3.00', '2.00', '0.10'], false),
    [
      ["Collar maker's salary (monthly)", '2,773.33'],
      ['Depreciation on sewing machines', '55.00', true],
      ['Rent', '250.00', true],
      ['Utilities and insurance', '200.00', true],
      ['Scissors, thread, and cording', '400.00', true],
      ['Loan payment', '183.33'],
      ['Salary to self', '166.67'],
    ],
    { 11: '12//3', 12: '.50x4', 13: '9//3' },
  ),
  { n: 18, h: 5 },
  total(19, 'Collar', '9.10', '4,028.33'),
  { n: 20, h: 20 },
  { n: 21, h: 5, kind: 'bar' },
  { n: 22, h: 23 },
  { n: 23, h: 20, kind: 'title', a: 'Leashes' },
  { n: 24, h: 5 },
  { n: 25, h: 17, kind: 'head' },
  { n: 26, h: 5, kind: 'rule' },
  ...body(
    27,
    10,
    variable(['6.00', '4.50', '1.50', '0.10']),
    [
      ["Leash maker's salary (monthly)", '2,773.00', true],
      ['Depreciation on sewing machines', '55.00', true],
      ['Rent', '250.00', true],
      ['Utilities and insurance', '200.00', true],
      ['Scissors, thread, and cording', '400.00', true],
      ['Loan payment', '183.33', true],
      ['Salary to self', '167.67', true],
    ],
    { 29: '12//2', 30: '.50x3', 31: '9//2' },
  ),
  { n: 37, h: 5 },
  total(38, 'Leash', '12.10', '4,029.00', '$ 4,029.00'),
  { n: 39, h: 17 },
  { n: 40, h: 5, kind: 'bar' },
  { n: 41, h: 17 },
  { n: 42, h: 20, kind: 'title', a: 'Harnesses' },
  { n: 43, h: 5 },
  { n: 44, h: 17, kind: 'head' },
  { n: 45, h: 5, kind: 'rule' },
  ...body(
    46,
    10,
    variable(['6.00', '4.50', '4.00', '0.10']),
    [
      ["Harness maker's salary", '2,946.00', true],
      ['Depreciation on sewing machines', '55.00', true],
      ['Rent', '250.00', true],
      ['Utilities and insurance', '200.00', true],
      ['Scissors, thread, and cording', '400.00', true],
      ['Loan', '183.33', true],
      ['Salary to self', '167.67', true],
    ],
    { 46: '12//2', 47: '9//2', 48: '.50x8' },
  ),
  { n: 56, h: 5 },
  total(57, 'Harness', '14.60', '4,201.00'),
];

const HEIGHTS: Record<number, string> = {
  5: 'h-[5px]',
  16: 'h-[16px]',
  17: 'h-[17px]',
  18: 'h-[18px]',
  20: 'h-[20px]',
  23: 'h-[23px]',
};
const COLUMNS = 'ABCDEFGHIJKLMNOPQRSTUVWX'.split('');
const WIDTHS: Record<string, string> = {
  A: 'w-[214px]',
  B: 'w-[111px]',
  C: 'w-[65px]',
  D: 'w-[215px]',
  E: 'w-[111px]',
  F: 'w-[19px]',
  G: 'w-[70px]',
  X: 'w-auto',
};

const AmountCell: React.FC<{ cost?: Cost; kind?: Row['kind'] }> = ({ cost, kind }) => {
  if (!cost) return <td className={kind === 'rule' ? 'border-t border-black' : ''} />;
  const look = kind === 'total' ? 'border-t border-b-2 border-black bg-[#ffe699] font-bold' : cost[2] ? 'bg-[#bdd7ee]' : '';
  return (
    <td className={look}>
      <div className="flex justify-between px-[7px]">
        <span>$</span>
        <span>{cost[1]}</span>
      </div>
    </td>
  );
};

const SheetRow: React.FC<{ row: Row }> = ({ row }) => {
  const { n, h, kind, a, b, d, g } = row;
  const head = kind === 'head';
  const line = kind === 'rule' ? 'border-t border-black' : head ? 'font-bold' : kind === 'total' ? 'pb-[2px] font-bold' : '';
  const indent = kind === 'total';

  return (
    <tr className={HEIGHTS[h]}>
      <th scope="row" className="border-t border-r border-t-[#ababab] border-r-[#999] bg-[#e6e6e6] font-normal">
        <div className={`flex items-end justify-center overflow-hidden ${h === 5 ? 'h-1' : ''}`}>{n}</div>
      </th>
      {kind === 'bar' ? (
        <td colSpan={6} className="border-r border-r-black bg-[#808080]" />
      ) : (
        <>
          <td className={`pl-[2px] ${line} ${kind === 'title' ? 'pb-px text-[13px] font-bold' : ''}`}>
            {a}
            {head && 'Item'}
            {b && <span className={indent ? 'pl-[9px]' : ''}>{b[0]}</span>}
          </td>
          {head ? <td className="text-center font-bold">Variable Cost/Item</td> : <AmountCell cost={b} kind={kind} />}
          <td />
          <td className={`pl-[3px] ${line}`}>
            {head && 'Item'}
            {d && <span className={indent ? 'pl-[18px]' : ''}>{d[0]}</span>}
          </td>
          {head ? <td className="text-center font-bold">Fixed Costs</td> : <AmountCell cost={d} kind={kind} />}
          <td className="border-r border-black" />
        </>
      )}
      <td className={g?.startsWith('$') ? 'pb-[2px] pr-[7px] text-right' : 'pl-[2px]'}>{g}</td>
      <td colSpan={17} />
    </tr>
  );
};

const ScrollButton: React.FC<{ label: string; d: string }> = ({ label, d }) => (
  <button aria-label={label} className="flex h-[15px] w-[15px] shrink-0 items-center justify-center border border-[#777] bg-white">
    <svg className="h-[7px] w-[7px]" viewBox="0 0 7 7" fill="#666">
      <path d={d} />
    </svg>
  </button>
);

const Sheet = () => (
  <div className="flex min-h-0 flex-1 bg-[#e6e6e6]">
    <div className="flex min-w-0 flex-1 flex-col overflow-hidden border-b border-r border-[#999] bg-white">
      <div className="h-[9px] shrink-0 bg-[#e6e6e6]" />
      <table className="w-full table-fixed border-separate border-spacing-0 bg-white font-[Lato,Carlito,sans-serif] text-[12px] leading-[15px] text-black [&_td]:overflow-hidden [&_td]:align-bottom [&_td]:whitespace-nowrap [&_th]:align-bottom">
        <colgroup>
          <col className="w-[26px]" />
          {COLUMNS.map((c) => (
            <col key={c} className={WIDTHS[c] ?? 'w-16'} />
          ))}
        </colgroup>
        <thead>
          <tr className="h-[18px] bg-[#e6e6e6]">
            <th className="border-b border-r border-[#999]">
              <svg className="mb-1 ml-[13px] h-[9px] w-[9px]" viewBox="0 0 9 9" fill="#b4b4b4">
                <path d="M9 0v9H0z" />
              </svg>
            </th>
            {COLUMNS.map((c) => (
              <th
                key={c}
                scope="col"
                className={`border-b border-b-[#999] font-normal ${c === 'A' ? '' : 'border-l border-l-[#b5b5b5]'} ${c === 'X' ? 'pr-2 text-right' : ''}`}
              >
                {c}
              </th>
            ))}
          </tr>
        </thead>
        <tbody>
          {ROWS.map((row) => (
            <SheetRow key={row.n} row={row} />
          ))}
        </tbody>
      </table>
      <div className="flex flex-1">
        <span className="w-[26px] border-r border-t border-r-[#999] border-t-[#ababab] bg-[#e6e6e6]" />
        <span className="w-[735px] border-r border-black" />
      </div>
    </div>
    <div className="ml-[3px] mr-[3px] mt-[11px] flex w-[15px] flex-col bg-[#dadada]">
      <ScrollButton label="Scroll up" d="M3.5 1.5 7 5.5H0z" />
      <div className="flex flex-1 flex-col pb-[39px] pt-[75px]">
        <div className="flex-1 border border-[#777] bg-white" />
      </div>
      <ScrollButton label="Scroll down" d="M3.5 5.5 7 1.5H0z" />
    </div>
  </div>
);

const SHEET_TABS = [
  { name: 'Cost Classification', className: 'w-[132px] bg-[#00b0f0] text-black' },
  { name: 'Variable and Fixed Costs', className: 'w-[175px]' },
  { name: 'Contribution Margin Analysis', className: 'w-[201px] bg-[#00b050] text-black' },
  { name: 'Break-Even Analysis', className: 'w-[142px] bg-[#00b050] text-black' },
  { name: 'COGS', className: 'w-[53px] bg-[#7030a0] text-white' },
  { name: 'Income Statement', className: 'w-[131px] bg-[#7030a0] text-white' },
  { name: 'Variances', className: 'w-[77px] bg-[#7030a0] text-white' },
];

const SheetTabs = () => (
  <div className="flex h-7 shrink-0 items-start border-b border-[#c6c6c6] bg-[#e6e6e6] text-[12px]">
    <div className="flex h-[26px] w-[100px] items-center gap-6 pl-[27px] text-[#bdbdbd]">
      <button aria-label="Previous sheet">
        <svg className="h-2 w-[5px]" viewBox="0 0 5 8" fill="currentColor">
          <path d="M5 0v8L0 4z" />
        </svg>
      </button>
      <button aria-label="Next sheet">
        <svg className="h-2 w-[5px]" viewBox="0 0 5 8" fill="currentColor">
          <path d="M0 0v8l5-4z" />
        </svg>
      </button>
    </div>
    {SHEET_TABS.map((tab) =>
      tab.name === 'Variable and Fixed Costs' ? (
        <button
          key={tab.name}
          className={`ml-[3px] h-6 border-x border-b-2 border-x-white border-b-[#217346] bg-white px-[2px] pb-px pt-[3px] font-bold text-[#217346] ${tab.className}`}
        >
          <span className="flex h-full items-center justify-center whitespace-nowrap bg-linear-to-b from-white to-[#99dff9]">{tab.name}</span>
        </button>
      ) : (
        <span key={tab.name} className="flex items-start">
          <button className={`ml-[3px] mt-[2px] h-[22px] whitespace-nowrap ${tab.className}`}>{tab.name}</button>
          {tab.name !== 'Cost Classification' && <span className="ml-[2px] mt-[3px] h-5 w-px -mr-px bg-[#999]" />}
        </span>
      ),
    )}
    <button aria-label="New sheet" className="ml-[34px] mt-[5px] text-[#777]">
      <svg className="h-[17px] w-[17px]" viewBox="0 0 17 17" fill="none" stroke="currentColor">
        <circle cx="8.5" cy="8.5" r="7.5" />
        <path d="M8.5 4.5v8M4.5 8.5h8" strokeWidth={2} />
      </svg>
    </button>
    <svg className="ml-auto mt-2 h-[10px] w-[2px]" viewBox="0 0 2 10" fill="#b0b0b0">
      <path d="M0 0h2v2H0zM0 4h2v2H0zM0 8h2v2H0z" />
    </svg>
    <div className="ml-[15px] mr-[21px] mt-[6px] flex w-[220px] bg-[#dadada]">
      <ScrollButton label="Scroll left" d="M1.5 3.5 5.5 0v7z" />
      <div className="mr-[9px] flex-1 border border-[#777] bg-white" />
      <ScrollButton label="Scroll right" d="M5.5 3.5 1.5 0v7z" />
    </div>
  </div>
);

const StatusBar = () => {
  const [zoom, setZoom] = useState(100);

  return (
    <footer className="flex h-[22px] shrink-0 items-center bg-[#f3f2f1] text-[11px] text-[#444]">
      <span className="pl-2">Ready</span>
      <svg className="ml-5 h-[14px] w-[14px]" viewBox="0 0 14 14" fill="none" stroke="#555" strokeWidth={1.2}>
        <circle cx="6" cy="2" r="1.5" />
        <path d="M1 2.5c0 1.5 2 2.5 3 2.5v3L2.5 13.5M11 2.5c0 1.5-2 2.5-3 2.5v2M4.5 13 6 9M7 10l2.5 3 4-5" />
      </svg>
      <span className="ml-[2px]">Accessibility: Good to go</span>
      <div className="ml-auto flex h-full items-center">
        <button aria-label="Normal view" className="flex h-full w-10 items-center justify-center bg-[#cfcdcb]">
          <svg className="h-[13px] w-[13px]" viewBox="0 0 13 13" fill="none" stroke="#444">
            <path d="M0.5 0.5h12v12h-12zM0.5 4.5h12M0.5 8.5h12M4.5 0.5v12M8.5 0.5v12" />
          </svg>
        </button>
        <button aria-label="Page layout view" className="flex h-full w-10 items-center justify-center">
          <svg className="h-[13px] w-[14px]" viewBox="0 0 14 13" fill="none" stroke="#444">
            <path d="M0.5 0.5h13v12h-13zM3.5 2.5h7v8h-7zM5 4.5h4M5 6.5h4M5 8.5h4" />
          </svg>
        </button>
        <button aria-label="Page break preview" className="flex h-full w-10 items-center justify-center">
          <svg className="h-[13px] w-[14px]" viewBox="0 0 14 13" fill="none" stroke="#444">
            <path d="M0.5 0.5h13v12h-13zM4.5 0.5v7M0.5 7.5h8v-7" />
          </svg>
        </button>
        <button aria-label="Zoom out" className="ml-[6px]">
          <svg className="h-2 w-2" viewBox="0 0 8 8" stroke="#444">
            <path d="M0 3.5h8" />
          </svg>
        </button>
        <input
          type="range"
          aria-label="Zoom"
          min={0}
          max={200}
          value={zoom}
          onChange={(e) => setZoom(Number(e.target.value))}
          className="ml-[5px] h-3 w-[100px] appearance-none bg-[linear-gradient(#555,#555)] bg-[length:100%_1px] bg-center bg-no-repeat [&::-webkit-slider-thumb]:h-[11px] [&::-webkit-slider-thumb]:w-[5px] [&::-webkit-slider-thumb]:appearance-none [&::-webkit-slider-thumb]:bg-[#777]"
        />
        <button aria-label="Zoom in" className="ml-[5px]">
          <svg className="h-2 w-2" viewBox="0 0 8 8" stroke="#444">
            <path d="M0 4h8M4 0v8" />
          </svg>
        </button>
        <span className="ml-3 pr-2">{zoom}%</span>
      </div>
    </footer>
  );
};

const App: React.FC = () => (
  <div className="flex h-screen flex-col overflow-hidden bg-[#f3f2f1] font-['Open_Sans','Segoe_UI',sans-serif]">
    <div className="flex min-h-0 flex-1">
      <aside className="flex w-2 shrink-0 flex-col bg-[#f0f0f0]">
        <div className="h-[34px] bg-[#6e1014]" />
        <div className="h-9 bg-[#a61c20]" />
        <svg className="mt-2 h-1 w-[3px]" viewBox="0 0 3 4" fill="#444">
          <path d="M0 0l3 4H0z" />
        </svg>
        <div className="mt-[124px] h-[383px] w-[6px] bg-[#c1c1c1]" />
        <svg className="mb-2 mt-auto h-1 w-[3px]" viewBox="0 0 3 4" fill="#444">
          <path d="M0 4l3-4H0z" />
        </svg>
      </aside>
      <main className="flex min-w-0 flex-1 flex-col">
        <TitleBar />
        <MenuBar />
        <Ribbon />
        <FormulaBar />
        <Sheet />
        <SheetTabs />
        <StatusBar />
      </main>
    </div>
    <div className="flex h-2 shrink-0 overflow-hidden bg-linear-to-r from-[#1b1b1b] from-30% via-[#3a3030] via-50% to-[#1b1b1b] to-75% text-[11px] text-white">
      <span className="ml-[450px] w-12 bg-[#4a4a4a]" />
      <span className="ml-auto mr-[64px] pt-[3px] leading-3">5:35 PM</span>
    </div>
  </div>
);

export default App;
